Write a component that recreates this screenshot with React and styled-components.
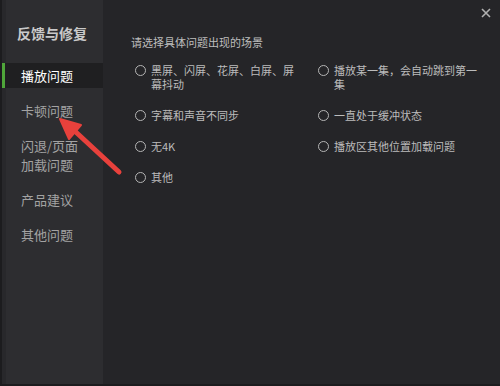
import React from "react";
import styled, { createGlobalStyle } from "styled-components";

const Global = createGlobalStyle`
  html, body { margin: 0; padding: 0; background: #252528; }
  body { font-family: "Noto Sans CJK SC", "Noto Sans", sans-serif; }
  * { box-sizing: border-box; }
`;

const Window = styled.div`
  position: relative;
  width: 500px;
  height: 386px;
  display: flex;
  background: #252528;
  border-left: 2px solid #1c1c1e;
  border-bottom: 2px solid #1c1c1e;
  overflow: hidden;
`;

const Sidebar = styled.nav`
  width: 101px;
  flex-shrink: 0;
  background: #2d2d30;
  border-left: 4px solid #28282b;
  display: flex;
  flex-direction: column;
  padding-top: 23px;
`;

const Title = styled.h1`
  margin: 0 0 20px 11px;
  font-size: 14px;
  line-height: 20px;
  font-weight: 700;
  color: #c9c9c9;
  white-space: nowrap;
`;

const NavList = styled.div`
  display: flex;
  flex-direction: column;
  gap: 10px;
`;

const NavItem = styled.div`
  position: relative;
  margin-left: -4px;
  padding: 3px 0 3px 16px;
  font-size: 13px;
  line-height: 19px;
  color: ${(p) => (p.$active ? "#ffffff" : "#a3a3a3")};
  background: ${(p) => (p.$active ? "#1f1f21" : "transparent")};
  border-left: 3px solid ${(p) => (p.$active ? "#4fa63a" : "transparent")};
  white-space: pre-line;
`;

const Main = styled.main`
  flex: 1;
  padding: 35px 0 0 28px;
  display: flex;
  flex-direction: column;
`;

const Heading = styled.div`
  font-size: 11px;
  line-height: 14px;
  color: #bdbdbd;
  margin-bottom: 14px;
`;

const Options = styled.div`
  display: grid;
  grid-template-columns: 183px 183px;
  row-gap: 17px;
  padding-left: 4px;
`;

const Option = styled.label`
  display: flex;
  align-items: flex-start;
  gap: 5px;
  font-size: 11px;
  line-height: 14px;
  color: #bcbcbc;
`;

const Radio = styled.span`
  width: 11px;
  height: 11px;
  margin-top: 1.5px;
  flex-shrink: 0;
  border: 1.5px solid #b5b5b5;
  border-radius: 50%;
`;

const OptionText = styled.span`
  width: 143px;
`;

const Close = styled.button`
  position: absolute;
  top: 7px;
  right: 8px;
  width: 12px;
  height: 12px;
  padding: 0;
  border: none;
  background: none;
  color: #b0b0b0;
  display: flex;
  align-items: center;
  justify-content: center;
`;

const Arrow = styled.svg`
  position: absolute;
  left: 0;
  top: 0;
  pointer-events: none;
`;

const navItems = ["播放问题", "卡顿问题", "闪退/页面\n加载问题", "产品建议", "其他问题"];

const options = [
  "黑屏、闪屏、花屏、白屏、屏幕抖动",
  "播放某一集，会自动跳到第一集",
  "字幕和声音不同步",
  "一直处于缓冲状态",
  "无4K",
  "播放区其他位置加载问题",
  "其他",
];

export default function App() {
  return (
    <>
      <Global />
      <Window>
        <Sidebar>
          <Title>反馈与修复</Title>
          <NavList>
            {navItems.map((t, i) => (
              <NavItem key={t} $active={i === 0}>
                {t}
              </NavItem>
            ))}
          </NavList>
        </Sidebar>
        <Main>
          <Heading>请选择具体问题出现的场景</Heading>
          <Options>
            {options.map((o) => (
              <Option key={o}>
                <Radio />
                <OptionText>{o}</OptionText>
              </Option>
            ))}
          </Options>
        </Main>
        <Close aria-label="关闭">
          <svg width="10" height="10" viewBox="0 0 10 10">
            <path d="M1 1L9 9M9 1L1 9" stroke="currentColor" strokeWidth="1.6" />
          </svg>
        </Close>
        <Arrow width="500" height="386" viewBox="0 0 500 386">
          <line x1="70" y1="128.5" x2="117" y2="172" stroke="#e8413c" strokeWidth="5" strokeLinecap="round" />
          <polygon points="58,119 79,125 67,139" fill="#e8413c" stroke="#e8413c" strokeWidth="2" strokeLinejoin="round" />
        </Arrow>
      </Window>
    </>
  );
}
